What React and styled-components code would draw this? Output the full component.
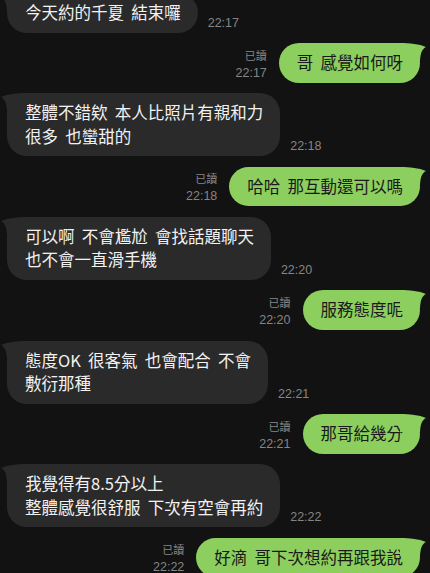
import React from 'react';
import styled, { createGlobalStyle } from 'styled-components';

const GlobalStyle = createGlobalStyle`
  html, body {
    margin: 0;
    padding: 0;
    background: #121212;
  }
  body {
    font-family: "Noto Sans CJK TC", "Noto Sans", sans-serif;
  }
`;

const Screen = styled.div`
  width: 430px;
  height: 573px;
  overflow: hidden;
  background: #121212;
`;

const List = styled.div`
  margin-top: -7px;
  display: flex;
  flex-direction: column;
  gap: 10.6px;
`;

const Row = styled.div`
  display: flex;
  align-items: flex-end;
  justify-content: ${({ $mine }) => ($mine ? 'flex-end' : 'flex-start')};
  gap: ${({ $mine }) => ($mine ? '12px' : '10px')};
  padding: 0 10px 0 7px;
`;

const Bubble = styled.div`
  position: relative;
  padding: 8px 17px 8px 18px;
  border-radius: 20px;
  background: ${({ $mine }) => ($mine ? '#8ccf5e' : '#2a2a2a')};
  color: ${({ $mine }) => ($mine ? '#1a1a1a' : '#f2f2f2')};
  font-size: 16.5px;
  line-height: 23.5px;
  white-space: nowrap;
  word-spacing: 3.5px;
`;

const Tail = styled.svg`
  position: absolute;
  top: 0;
  width: 26px;
  height: 18px;
  ${({ $mine }) => ($mine ? 'right: -6px;' : 'left: -6px; transform: scaleX(-1);')}
  fill: ${({ $mine }) => ($mine ? '#8ccf5e' : '#2a2a2a')};
`;

const Meta = styled.div`
  display: flex;
  flex-direction: column;
  align-items: flex-end;
  gap: 4px;
  margin-bottom: 3px;
  color: #858585;
`;

const Read = styled.span`
  font-family: "Noto Sans CJK TC", sans-serif;
  font-size: 11px;
  line-height: 14px;
`;

const Time = styled.span`
  font-family: "Liberation Sans", sans-serif;
  font-size: 12.5px;
  line-height: 14px;
  color: #858585;
  margin-bottom: ${({ $mine }) => ($mine ? '0' : '3px')};
`;

const messages = [
  { mine: false, lines: ['今天約的千夏 結束囉'], time: '22:17' },
  { mine: true, lines: ['哥 感覺如何呀'], time: '22:17' },
  { mine: false, lines: ['整體不錯欸 本人比照片有親和力', '很多 也蠻甜的'], time: '22:18' },
  { mine: true, lines: ['哈哈 那互動還可以嗎'], time: '22:18' },
  { mine: false, lines: ['可以啊 不會尷尬 會找話題聊天', '也不會一直滑手機'], time: '22:20' },
  { mine: true, lines: ['服務態度呢'], time: '22:20' },
  { mine: false, lines: ['態度OK 很客氣 也會配合 不會', '敷衍那種'], time: '22:21' },
  { mine: true, lines: ['那哥給幾分'], time: '22:21' },
  { mine: false, lines: ['我覺得有8.5分以上', '整體感覺很舒服 下次有空會再約'], time: '22:22' },
  { mine: true, lines: ['好滴 哥下次想約再跟我說'], time: '22:22' },
];

const Message = ({ mine, lines, time }) => {
  const bubble = (
    <Bubble $mine={mine}>
      <Tail $mine={mine} viewBox="0 0 26 18">
        <path d="M0 0 C10 0 19 1 26 4 C22 6 20.5 10 20 18 L0 18 Z" />
      </Tail>
      {lines.map((line, i) => (
        <React.Fragment key={i}>
          {i > 0 && <br />}
          {line}
        </React.Fragment>
      ))}
    </Bubble>
  );

  if (mine) {
    return (
      <Row $mine>
        <Meta>
          <Read>已讀</Read>
          <Time $mine>{time}</Time>
        </Meta>
        {bubble}
      </Row>
    );
  }

  return (
    <Row>
      {bubble}
      <Time>{time}</Time>
    </Row>
  );
};

const App = () => (
  <Screen>
    <GlobalStyle />
    <List>
      {messages.map((m, i) => (
        <Message key={i} {...m} />
      ))}
    </List>
  </Screen>
);

export default App;
